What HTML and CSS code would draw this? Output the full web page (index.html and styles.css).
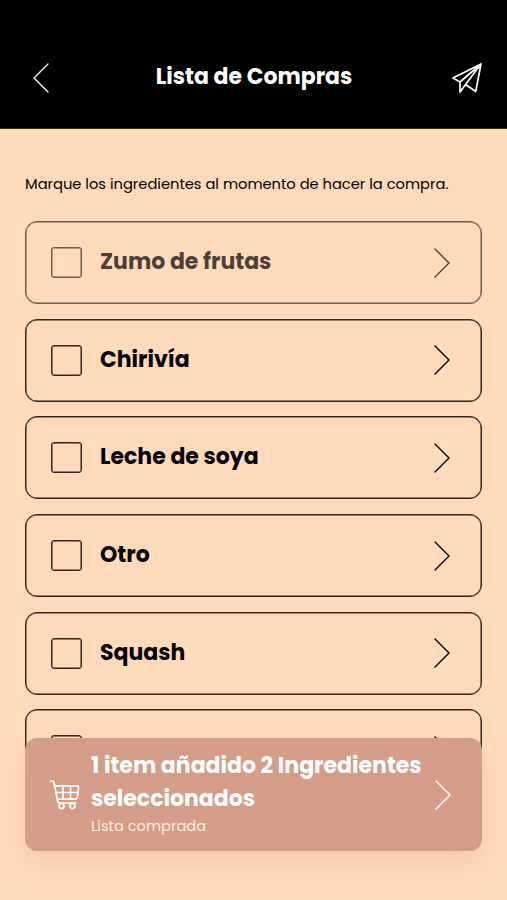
FILE: index.html
```html
<!DOCTYPE html>
<html lang="es">
<head>
<meta charset="utf-8">
<meta name="viewport" content="width=device-width, initial-scale=1">
<title>Lista de Compras</title>
<link rel="stylesheet" href="styles.css">
</head>
<body>
<div class="screen">
  <header class="header">
    <svg class="back" viewBox="0 0 18 32"><path d="M16 2 2 16l14 14"/></svg>
    <h1 class="title">Lista de Compras</h1>
    <svg class="send" viewBox="0 0 32 32"><path d="M30 2 2 16l7 4v10l5.500-7.500 10.200 7zM30 2 9 20M30 2 14.500 22.500"/></svg>
  </header>
  <main class="content">
    <p class="hint">Marque los ingredientes al momento de hacer la compra.</p>
    <ul class="list">
      <li class="item faded"><span class="box"></span><span class="name">Zumo de frutas</span><svg class="chevron" viewBox="0 0 18 32"><path d="m2 2 14 14L2 30"/></svg></li>
      <li class="item"><span class="box"></span><span class="name">Chirivía</span><svg class="chevron" viewBox="0 0 18 32"><path d="m2 2 14 14L2 30"/></svg></li>
      <li class="item"><span class="box"></span><span class="name">Leche de soya</span><svg class="chevron" viewBox="0 0 18 32"><path d="m2 2 14 14L2 30"/></svg></li>
      <li class="item"><span class="box"></span><span class="name">Otro</span><svg class="chevron" viewBox="0 0 18 32"><path d="m2 2 14 14L2 30"/></svg></li>
      <li class="item"><span class="box"></span><span class="name">Squash</span><svg class="chevron" viewBox="0 0 18 32"><path d="m2 2 14 14L2 30"/></svg></li>
      <li class="item"><span class="box"></span><span class="name"></span><svg class="chevron" viewBox="0 0 18 32"><path d="m2 2 14 14L2 30"/></svg></li>
    </ul>
  </main>
  <aside class="banner">
    <svg class="cart" viewBox="0 0 32 32"><path d="M1.500 2h1.700q1.500 0 1.800 1.500L8.600 22q.4 2 2 2H27M6 6.800h21.500q2.300 0 2 2.200l-1 9q-.3 2.200-2.600 2.200H8.400M7 13.500h22M14 7v13M21.500 7v13"/><circle cx="12.500" cy="27" r="2.500"/><circle cx="23.500" cy="27" r="2.500"/></svg>
    <div class="message">
      <strong class="selected"><span>1 item añadido 2 Ingredientes</span> <span>seleccionados</span></strong>
      <span class="bought">Lista comprada</span>
    </div>
    <svg class="chevron" viewBox="0 0 18 32"><path d="m2 2 14 14L2 30"/></svg>
  </aside>
</div>
</body>
</html>
```
FILE: styles.css
```css
* { box-sizing: border-box; }
body {
  margin: 0;
  background: #ffdabb;
  color: #000;
  font-family: Poppins, Inter, "Open Sans", sans-serif;
}
svg { fill: none; stroke: currentColor; stroke-linejoin: round; stroke-linecap: round; flex: none; }
.screen { position: relative; height: 900px; overflow: hidden; }
.header {
  display: flex;
  align-items: center;
  justify-content: space-between;
  height: 129px;
  padding: 27px 24px 0 32px;
  background: #000;
  border-bottom: 1px solid #382b20;
  color: #fff;
}
.back { width: 18px; height: 32px; stroke-width: 1.3; }
.title { margin: 0 0 2px 7px; font-size: 22px; line-height: 34px; font-weight: 700; white-space: nowrap; }
.send { width: 32px; height: 32px; stroke-width: 1.7; }
.content { padding: 43px 25px 0; }
.hint { margin: 0; font-size: 14.680px; line-height: 24px; white-space: nowrap; }
.list {
  display: flex;
  flex-direction: column;
  gap: 14.700px;
  margin: 25px 0 0;
  padding: 0;
  list-style: none;
}
.item {
  display: flex;
  align-items: center;
  flex: none;
  height: 83px;
  padding: 0 30px 0 25px;
  border: 1px solid #33271d;
  box-shadow: inset 0 0 0 .5px #33271d;
  border-radius: 12px;
}
.faded { opacity: .7; }
.box { width: 31px; height: 31px; border: 1px solid #33271d; box-shadow: inset 0 0 0 .5px #33271d; border-radius: 3px; }
.name { flex: 1; margin: 0 0 1px 18px; font-size: 22px; line-height: 34px; font-weight: 700; white-space: nowrap; }
.chevron { width: 18px; height: 32px; stroke-width: 1.4; }
.banner {
  position: absolute;
  left: 25px;
  right: 25px;
  top: 738px;
  height: 113px;
  display: flex;
  align-items: center;
  padding: 0 30px 0 24px;
  border-radius: 12px;
  background: #d39d87;
  color: #fff;
  box-shadow: 0 12px 26px rgba(165, 100, 65, .12);
}
.cart { width: 32px; height: 32px; stroke-width: 1.7; }
.message { flex: 1; margin: 0 0 2px 10px; white-space: nowrap; }
.selected { display: block; font-size: 22px; line-height: 33px; font-weight: 700; }
.selected span { display: block; }
.bought { display: block; font-size: 14.650px; line-height: 23px; color: #ffeee5; }
```
